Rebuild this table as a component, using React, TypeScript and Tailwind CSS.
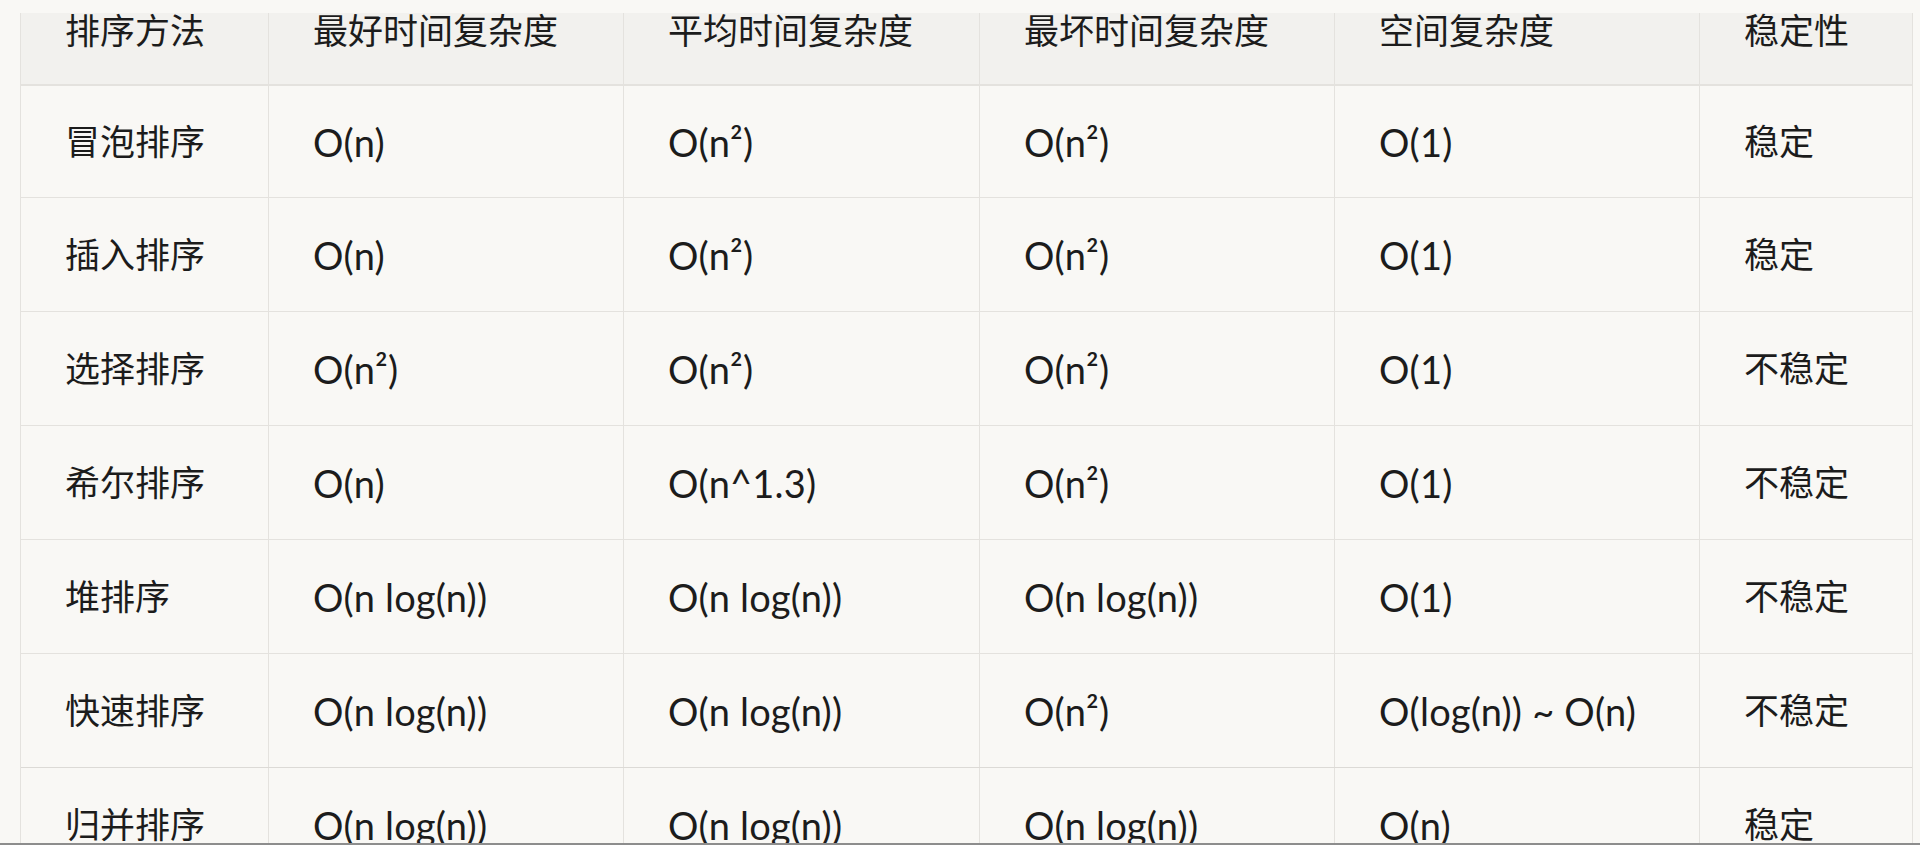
import React from "react";

const headers = ["排序方法", "最好时间复杂度", "平均时间复杂度", "最坏时间复杂度", "空间复杂度", "稳定性"];

const rows: string[][] = [
  ["冒泡排序", "O(n)", "O(n²)", "O(n²)", "O(1)", "稳定"],
  ["插入排序", "O(n)", "O(n²)", "O(n²)", "O(1)", "稳定"],
  ["选择排序", "O(n²)", "O(n²)", "O(n²)", "O(1)", "不稳定"],
  ["希尔排序", "O(n)", "O(n^1.3)", "O(n²)", "O(1)", "不稳定"],
  ["堆排序", "O(n log(n))", "O(n log(n))", "O(n log(n))", "O(1)", "不稳定"],
  ["快速排序", "O(n log(n))", "O(n log(n))", "O(n²)", "O(log(n)) ~ O(n)", "不稳定"],
  ["归并排序", "O(n log(n))", "O(n log(n))", "O(n log(n))", "O(n)", "稳定"],
];

const grid = "grid grid-cols-[248px_355px_356px_355px_365px_213px]";

export default function App() {
  return (
    <div className="h-[845px] w-[1920px] overflow-hidden bg-[#f9f8f5] flex flex-col font-['Lato','Noto_Sans_CJK_SC',sans-serif] text-[35px] text-[#1c1c1c]">
      <div className="flex-1 overflow-hidden pt-[13px] pl-[20px]">
        <div className="w-[1893px] border-l border-r border-[#e4e2de]">
          <div className={`${grid} h-[73px] bg-[#f2f1ee] border-b-2 border-[#e4e2de]`}>
            {headers.map((h, i) => (
              <div
                key={i}
                className={`px-[44px] pt-[0px] leading-[35px] whitespace-nowrap ${i < 5 ? "border-r border-[#e4e2de]" : ""}`}
              >
                {h}
              </div>
            ))}
          </div>
          {rows.map((r, ri) => (
            <div
              key={ri}
              className={`${grid} ${ri === 0 ? "h-[112px]" : "h-[114px]"} border-b ${ri === 5 ? "border-[#dcdad6]" : "border-[#e4e2de]"}`}
            >
              {r.map((c, ci) => (
                <div
                  key={ci}
                  className={`flex items-center px-[44px] whitespace-nowrap leading-none ${ci >= 1 && ci <= 4 ? "text-[38px] tracking-[0.2px]" : ""} ${ci < 5 ? "border-r border-[#e4e2de]" : ""}`}
                >
                  {c}
                </div>
              ))}
            </div>
          ))}
        </div>
      </div>
      <div className="h-[2px] bg-[#8d8d8d]" />
    </div>
  );
}
